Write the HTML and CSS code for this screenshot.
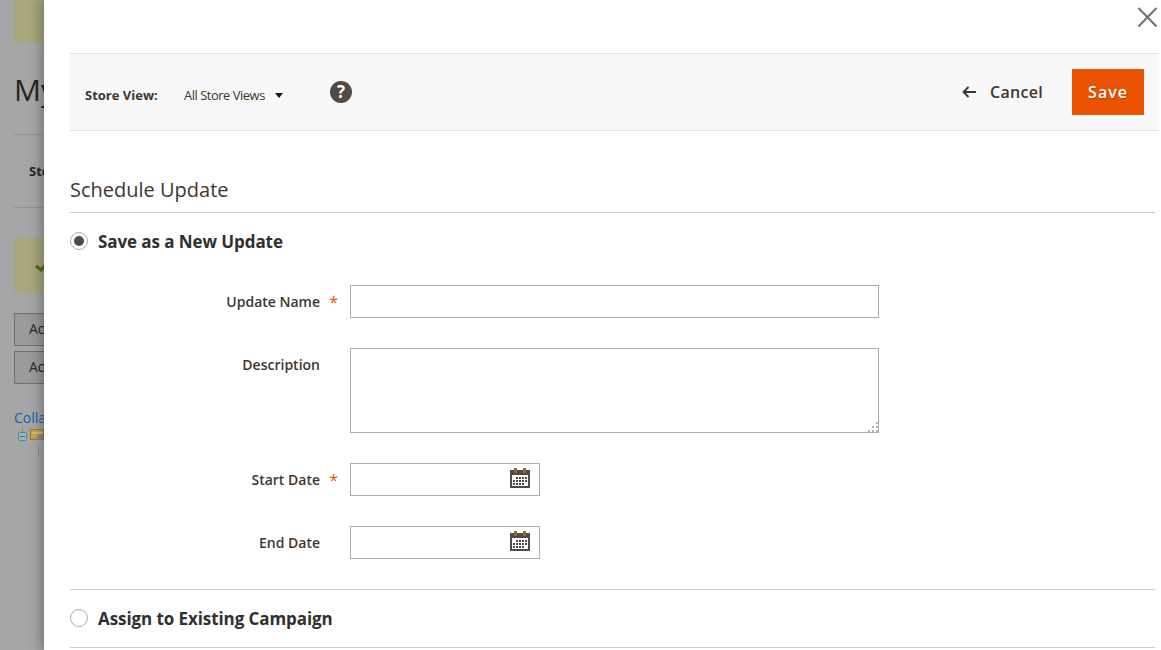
FILE: index.html
```html
<!DOCTYPE html>
<html lang="en">
<head>
<meta charset="utf-8">
<title>Schedule Update</title>
<link rel="stylesheet" href="styles.css">
</head>
<body>
<div class="page">
  <div class="notice-top"></div>
  <h1 class="page-title">My</h1>
  <div class="store-bar"><span class="store-bar-label">Store</span></div>
  <div class="success"><svg class="success-check" width="16" height="12" viewBox="0 0 16 12"><path d="M1 6l5 4 8-9" fill="none" stroke="#4f6f12" stroke-width="3"/></svg></div>
  <button class="bg-btn">Add Root</button>
  <button class="bg-btn">Add Sub</button>
  <a class="collapse-link">Collapse</a>
  <div class="tree">
    <svg width="30" height="30" viewBox="0 0 30 30">
      <path d="M8.500 0v5M24.500 19v10" stroke="#6f6f6f" stroke-dasharray="1 1" fill="none"/>
      <rect x="4.500" y="5.500" width="8" height="8" rx="1" fill="#a0b4b4" stroke="#3f8f9a"/>
      <path d="M6 9.500h5" stroke="#2c6f7c"/>
      <path d="M16.500 2.500h13v10h-13z" fill="#c2a54e" stroke="#a77a1c"/>
      <path d="M18 6h11" stroke="#e6d58e"/>
      <circle cx="26" cy="10" r="3" fill="#7d8e99"/>
    </svg>
  </div>

  <aside class="panel">
    <div class="panel-close">
      <svg width="22" height="21" viewBox="0 0 22 21"><path d="M1.500 1l18 18.500M19.500 1L1.500 19.500" fill="none" stroke="#736f6c" stroke-width="2"/></svg>
    </div>
    <header class="panel-bar">
      <div class="scope">
        <span class="scope-label">Store View:</span>
        <span class="scope-select">All Store Views<i class="caret"></i></span>
        <span class="help">?</span>
      </div>
      <div class="actions">
        <a class="cancel">
          <svg width="14" height="12" viewBox="0 0 14 12"><path d="M14 6H2M6.500 1L1.500 6l5 5" fill="none" stroke="#41362f" stroke-width="1.800"/></svg>
          Cancel
        </a>
        <button class="save">Save</button>
      </div>
    </header>

    <form class="sheet">
      <h2 class="sheet-title">Schedule Update</h2>
      <section class="option option-open">
        <label class="option-head"><input class="radio" type="radio" name="mode" checked><span class="option-text">Save as a New Update</span></label>
        <div class="fields">
          <div class="field">
            <label class="field-label required">Update Name</label>
            <input class="control control-wide" type="text">
          </div>
          <div class="field">
            <label class="field-label">Description</label>
            <textarea class="control control-wide control-area"></textarea>
          </div>
          <div class="field">
            <label class="field-label required">Start Date</label>
            <div class="control control-date">
              <svg class="calendar" width="20" height="20" viewBox="0 0 20 20">
                <rect x="0" y="2" width="20" height="18" fill="#514943"/>
                <rect x="2" y="7" width="16" height="11" fill="#fff"/>
                <rect x="4" y="0" width="3" height="5" fill="#8a6a3a"/>
                <rect x="13" y="0" width="3" height="5" fill="#8a6a3a"/>
                <path d="M6 9h2v2H6zM9 9h2v2H9zM12 9h2v2h-2zM15 9h2v2h-2zM3 12h2v2H3zM6 12h2v2H6zM9 12h2v2H9zM12 12h2v2h-2zM15 12h2v2h-2zM3 15h2v2H3zM6 15h2v2H6zM9 15h2v2H9zM12 15h2v2h-2z" fill="#514943"/>
              </svg>
            </div>
          </div>
          <div class="field">
            <label class="field-label">End Date</label>
            <div class="control control-date">
              <svg class="calendar" width="20" height="20" viewBox="0 0 20 20">
                <rect x="0" y="2" width="20" height="18" fill="#514943"/>
                <rect x="2" y="7" width="16" height="11" fill="#fff"/>
                <rect x="4" y="0" width="3" height="5" fill="#8a6a3a"/>
                <rect x="13" y="0" width="3" height="5" fill="#8a6a3a"/>
                <path d="M6 9h2v2H6zM9 9h2v2H9zM12 9h2v2h-2zM15 9h2v2h-2zM3 12h2v2H3zM6 12h2v2H6zM9 12h2v2H9zM12 12h2v2h-2zM15 12h2v2h-2zM3 15h2v2H3zM6 15h2v2H6zM9 15h2v2H9zM12 15h2v2h-2z" fill="#514943"/>
              </svg>
            </div>
          </div>
        </div>
      </section>
      <section class="option">
        <label class="option-head"><input class="radio" type="radio" name="mode"><span class="option-text">Assign to Existing Campaign</span></label>
      </section>
    </form>
  </aside>
</div>
</body>
</html>
```

FILE: styles.css
```css
html, body {
  margin: 0;
  height: 100%;
  overflow: hidden;
}
body {
  font-family: "Open Sans", sans-serif;
  color: #41362f;
}
.page {
  position: relative;
  height: 650px;
  padding: 0 14px;
  box-sizing: border-box;
  background: #a6a6a6;
  overflow: hidden;
}
.notice-top {
  height: 42px;
  background: #a9a67c;
}
.page-title {
  margin: 26px 0 0;
  font-size: 30px;
  line-height: 44px;
  font-weight: 400;
  color: #2a241f;
}
.store-bar {
  margin-top: 22px;
  height: 72px;
  box-sizing: content-box;
  border-top: 1px solid #929292;
  border-bottom: 1px solid #929292;
  display: flex;
  align-items: center;
  padding-left: 15px;
  font-size: 13px;
  font-weight: 700;
  color: #2a241f;
}
.success {
  margin-top: 30px;
  height: 55px;
  background: #a9a67c;
  display: flex;
  align-items: center;
  padding-left: 21px;
}
.bg-btn {
  display: block;
  margin: 20px 0 0;
  width: 200px;
  height: 33px;
  padding: 0 14px 2px;
  border: 1px solid #6f6f6f;
  background: #9a9a9a;
  color: #2a241f;
  font: 14px "Open Sans", sans-serif;
  text-align: left;
}
.bg-btn + .bg-btn {
  margin-top: 5px;
}
.collapse-link {
  display: block;
  margin-top: 24px;
  font-size: 14px;
  line-height: 19px;
  color: #1262ab;
}
.panel {
  position: absolute;
  top: 0;
  bottom: 0;
  left: 44px;
  right: 0;
  background: #fff;
  box-shadow: 0 0 12px 2px rgba(0, 0, 0, .35);
  padding-left: 26px;
}
.panel-close {
  height: 53px;
  display: flex;
  justify-content: flex-end;
  align-items: flex-start;
  padding: 7px 2px 0 0;
  box-sizing: border-box;
}
.panel-bar {
  margin-right: 2px;
  height: 78px;
  box-sizing: border-box;
  border-top: 1px solid #e3e3e3;
  border-bottom: 1px solid #e3e3e3;
  background: #f8f8f8;
  display: flex;
  justify-content: space-between;
  align-items: center;
  padding: 0 15px;
}
.scope {
  display: flex;
  align-items: center;
}
.scope-label {
  width: 99px;
  padding-top: 6px;
  font-size: 13px;
  font-weight: 700;
}
.scope-select {
  width: 146px;
  padding-top: 6px;
  font-size: 13px;
  letter-spacing: -.5px;
  display: flex;
  align-items: center;
  color: #41362f;
}
.caret {
  margin-left: 10px;
  width: 0;
  height: 0;
  border: 4px solid transparent;
  border-top: 5px solid #1a1a1a;
  border-bottom: 0;
}
.help {
  width: 22px;
  height: 22px;
  border-radius: 50%;
  background: #514943;
  color: #fff;
  font-size: 17px;
  font-weight: 700;
  line-height: 22px;
  text-align: center;
}
.actions {
  display: flex;
  align-items: center;
  gap: 29px;
}
.cancel {
  display: flex;
  align-items: center;
  gap: 14px;
  font-size: 16px;
  font-weight: 600;
  letter-spacing: .3px;
}
.save {
  width: 72px;
  height: 46px;
  border: 0;
  background: #eb5202;
  color: #fff;
  font: 600 16px "Open Sans", sans-serif;
  letter-spacing: 1px;
  text-shadow: 1px 1px 1px rgba(0, 0, 0, .25);
}
.sheet {
  margin-right: 6px;
}
.sheet-title {
  margin: 0;
  padding-top: 45px;
  height: 82px;
  box-sizing: border-box;
  font-size: 20px;
  line-height: 27px;
  font-weight: 400;
  border-bottom: 1px solid #ccc;
}
.option {
  border-bottom: 1px solid #ccc;
  padding: 17px 0 18px;
}
.option-open {
  padding-bottom: 30px;
}
.option-head {
  display: flex;
  align-items: center;
  gap: 10px;
  font-size: 17px;
  line-height: 20px;
  font-weight: 700;
  letter-spacing: -.08px;
  color: #303030;
}
.option-text {
  padding-top: 2px;
}
.radio {
  appearance: none;
  margin: 0;
  width: 18px;
  height: 18px;
  border: 1px solid #adadad;
  border-radius: 50%;
  background: #fff;
  position: relative;
}
.radio:checked::after {
  content: "";
  position: absolute;
  left: 3px;
  top: 3px;
  width: 10px;
  height: 10px;
  border-radius: 50%;
  background: #514943;
}
.fields {
  margin-top: 33px;
  display: flex;
  flex-direction: column;
  gap: 30px;
}
.field {
  display: flex;
  align-items: flex-start;
}
.field-label {
  width: 280px;
  padding-right: 30px;
  box-sizing: border-box;
  text-align: right;
  font-size: 14px;
  line-height: 33px;
  font-weight: 600;
  position: relative;
}
.required::after {
  content: "*";
  position: absolute;
  right: 12px;
  top: 1px;
  color: #eb5202;
  font-size: 16px;
  font-weight: 400;
}
.control {
  display: block;
  margin: 0;
  box-sizing: border-box;
  height: 33px;
  border: 1px solid #adadad;
  background: #fff;
  font: 14px "Open Sans", sans-serif;
  outline: none;
}
.control-wide {
  width: 529px;
}
.control-area {
  height: 85px;
}
.control-area::-webkit-resizer {
  background-color: #fff;
  background-image:
    linear-gradient(#b5b5b5, #b5b5b5), linear-gradient(#b5b5b5, #b5b5b5),
    linear-gradient(#b5b5b5, #b5b5b5), linear-gradient(#b5b5b5, #b5b5b5),
    linear-gradient(#b5b5b5, #b5b5b5), linear-gradient(#b5b5b5, #b5b5b5);
  background-size: 2px 2px;
  background-repeat: no-repeat;
  background-position: 13px 5px, 9px 9px, 13px 9px, 5px 13px, 9px 13px, 13px 13px;
}
.control-date {
  width: 190px;
  display: flex;
  justify-content: flex-end;
  align-items: center;
  padding: 0 9px 4px 0;
}
```
